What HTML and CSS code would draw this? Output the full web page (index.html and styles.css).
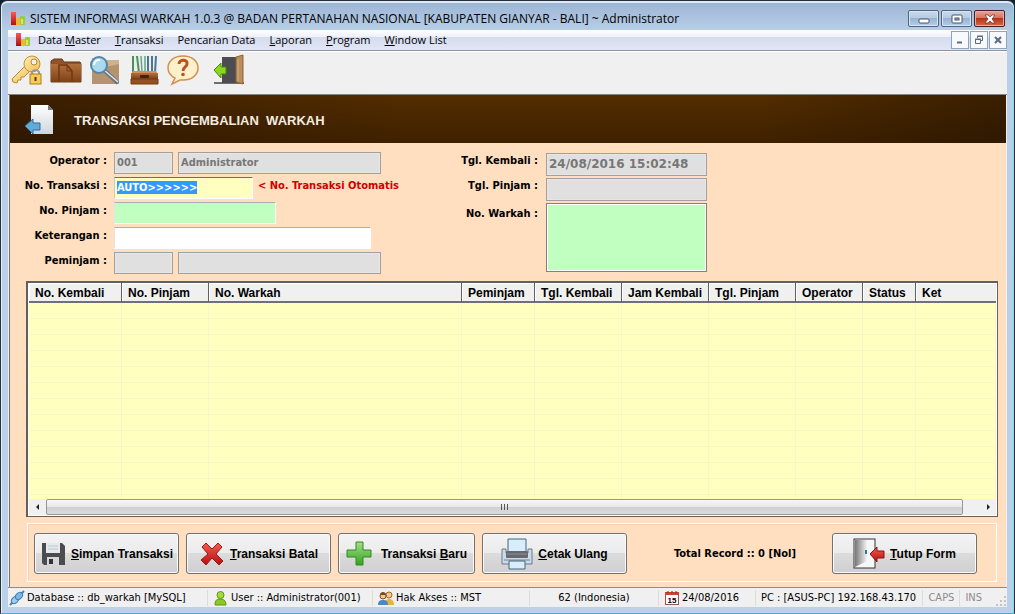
FILE: index.html
```html
<!DOCTYPE html>
<html lang="id">
  <head>
    <meta charset="UTF-8" />
    <meta name="viewport" content="width=device-width, initial-scale=1.0" />
    <title>Sistem Informasi Warkah</title>
    <link rel="stylesheet" href="styles.css" />
  </head>
  <body>
    <svg class="defs" width="0" height="0" aria-hidden="true">
      <defs>
        <linearGradient id="g-red" x1="0" y1="0" x2="0" y2="1">
          <stop offset="0" stop-color="#f0604e" />
          <stop offset="1" stop-color="#b80c10" />
        </linearGradient>
        <linearGradient id="g-green" x1="0" y1="0" x2="0" y2="1">
          <stop offset="0" stop-color="#a5dc8a" />
          <stop offset="1" stop-color="#35a31c" />
        </linearGradient>
        <linearGradient id="g-brown" x1="0" y1="0" x2="0" y2="1">
          <stop offset="0" stop-color="#b2703c" />
          <stop offset="1" stop-color="#7d4218" />
        </linearGradient>
        <linearGradient id="g-gold" x1="0" y1="0" x2="1" y2="1">
          <stop offset="0" stop-color="#ffeeb8" />
          <stop offset="1" stop-color="#eebc4e" />
        </linearGradient>
        <linearGradient id="g-page" x1="0" y1="0" x2="0" y2="1">
          <stop offset="0" stop-color="#ffffff" />
          <stop offset="1" stop-color="#cfd6dc" />
        </linearGradient>
        <linearGradient id="g-door" x1="0" y1="0" x2="1" y2="0">
          <stop offset="0" stop-color="#777" />
          <stop offset="1" stop-color="#f4f4f4" />
        </linearGradient>
        <symbol id="logo" viewBox="0 0 16 16">
          <rect x="1" y="1" width="5" height="13" fill="url(#g-red)" />
          <rect x="6" y="7" width="4" height="7" fill="#f5b52e" />
          <rect x="10" y="5" width="5" height="9" rx="1" fill="#9ccb3c" />
          <rect x="11" y="8" width="2" height="5" fill="#d8e86a" />
        </symbol>
      </defs>
    </svg>

    <div class="window">
      <!-- Judul jendela -->
      <header class="title-bar">
        <svg class="icon-16" viewBox="0 0 16 16"><use href="#logo" /></svg>
        <h1>SISTEM INFORMASI WARKAH 1.0.3 @ BADAN PERTANAHAN NASIONAL [KABUPATEN GIANYAR - BALI] ~ Administrator</h1>
        <div class="window-controls">
          <button type="button" aria-label="Minimize">
            <svg width="14" height="12" viewBox="0 0 14 12"><rect x="2" y="6" width="10" height="4" rx="1" fill="#fff" stroke="#4a5568" /></svg>
          </button>
          <button type="button" aria-label="Maximize">
            <svg width="14" height="12" viewBox="0 0 14 12"><rect x="2" y="2" width="10" height="8" rx="1" fill="#fff" stroke="#4a5568" /><rect x="5" y="5" width="4" height="2" fill="#9db9d6" stroke="#4a5568" /></svg>
          </button>
          <button type="button" class="close" aria-label="Close">
            <svg width="14" height="12" viewBox="0 0 14 12"><path d="M2 2h3l2 2 2-2h3L9 6l3 4H9L7 8l-2 2H2l3-4z" fill="#fff" stroke="#5a3038" stroke-width=".7" /></svg>
          </button>
        </div>
      </header>

      <div class="client">
        <!-- Menu utama -->
        <div class="menu-bar">
          <svg class="icon-16" viewBox="0 0 16 16"><use href="#logo" /></svg>
          <nav class="menu">
            <a href="#">Data <u>M</u>aster</a>
            <a href="#"><u>T</u>ransaksi</a>
            <a href="#">Pencarian Data</a>
            <a href="#"><u>L</u>aporan</a>
            <a href="#"><u>P</u>rogram</a>
            <a href="#"><u>W</u>indow List</a>
          </nav>
          <div class="child-controls">
            <button type="button" aria-label="Minimize form">
              <svg width="12" height="12" viewBox="0 0 12 12"><path d="M3 8.500h5" stroke="#5a6a80" stroke-width="2" /></svg>
            </button>
            <button type="button" aria-label="Restore form">
              <svg width="12" height="12" viewBox="0 0 12 12" fill="none" stroke="#5a6a80"><path d="M4.500 4V2.500h5v4H8M4 2h6" /><path d="M2.500 5.500h5v4h-5zM2 5h6" /></svg>
            </button>
            <button type="button" aria-label="Close form">
              <svg width="12" height="12" viewBox="0 0 12 12"><path d="M3 3l6 6M9 3L3 9" stroke="#5a6a80" stroke-width="2" /></svg>
            </button>
          </div>
        </div>

        <!-- Toolbar -->
        <div class="toolbar">
          <button type="button" aria-label="Hak akses">
            <svg width="32" height="32" viewBox="0 0 32 32">
              <path d="M14 12L1 25l1 3 4 1 1-3h3v-3h3l6-6z" fill="url(#g-gold)" stroke="#b98a2e" />
              <circle cx="21" cy="10" r="8" fill="url(#g-gold)" stroke="#c0923a" />
              <circle cx="23" cy="8" r="3" fill="#f0f0f0" stroke="#b98a2e" />
              <path d="M21 21v-3a4 4 0 0 1 7 0v3" fill="none" stroke="#9a9a9a" stroke-width="2" />
              <rect x="19" y="20" width="11" height="10" fill="#f6cc53" stroke="#b27a1c" />
              <path d="M24.500 23v4" stroke="#5a3708" stroke-width="2" />
            </svg>
          </button>
          <button type="button" aria-label="Data master">
            <svg width="32" height="32" viewBox="0 0 32 32">
              <path d="M1 28V7l3-2h8l2 3h16l1 2v18z" fill="#91532a" stroke="#6b3713" />
              <path d="M1 10h30v18H1z" fill="url(#g-brown)" />
              <path d="M9 27V11h8l5 6v10" fill="none" stroke="#71380f" stroke-width="1.500" />
              <path d="M17 11v6h5" fill="none" stroke="#71380f" />
            </svg>
          </button>
          <button type="button" aria-label="Pencarian">
            <svg width="32" height="32" viewBox="0 0 32 32">
              <path d="M3 4h12l2 2h13v24H3z" fill="#cdb290" />
              <path d="M3 16l27-6v20H3z" fill="#b3946e" />
              <path d="M15 16L29 29" stroke="#687280" stroke-width="4" />
              <path d="M15 16L29 28" stroke="#e4e8ec" stroke-width="1.500" />
              <circle cx="10" cy="11" r="8" fill="#a9daf0" stroke="#5585a8" stroke-width="2" />
              <path d="M5 11a5 5 0 0 1 6-5" fill="none" stroke="#fff" stroke-width="2" />
            </svg>
          </button>
          <button type="button" aria-label="Arsip">
            <svg width="32" height="32" viewBox="0 0 32 32">
              <path d="M4 2h24v17H4z" fill="#e9eeea" />
              <path d="M5 2v17M9 2l2 17" stroke="#4a8f63" stroke-width="2" />
              <path d="M13 2l1 17M17 2v17" stroke="#69a38e" stroke-width="1.500" />
              <path d="M20 2v17M24 2v17M28 2l-1 17" stroke="#4c7597" stroke-width="2" />
              <path d="M5 17h23l2 3H3z" fill="#d98b55" />
              <path d="M3 19h27v6H3z" fill="url(#g-brown)" />
              <path d="M3 25h27v5H3z" fill="#96501f" stroke="#703a12" />
              <rect x="12" y="21" width="9" height="3" rx="1" fill="#45220a" />
            </svg>
          </button>
          <button type="button" aria-label="Bantuan">
            <svg width="32" height="32" viewBox="0 0 32 32">
              <path d="M16 2c9 0 15 5 15 12s-6 12-15 12h-3l-8 4 3-6C4 22 1 19 1 14 1 7 7 2 16 2z" fill="#fff0cc" stroke="#cf9150" stroke-width="1.500" />
              <path d="M12 10c0-5 9-5 8 0 0 3-4 3-4 7" fill="none" stroke="#bd5220" stroke-width="3" />
              <circle cx="16" cy="20.500" r="1.800" fill="#bd5220" />
            </svg>
          </button>
          <button type="button" class="exit" aria-label="Keluar">
            <svg width="32" height="32" viewBox="0 0 32 32">
              <path d="M1 29h30" stroke="#444" stroke-width="1.500" />
              <rect x="9" y="3" width="15" height="26" fill="#4d4c50" />
              <path d="M23 3l7-2v29l-7-2z" fill="#b98d5c" stroke="#8d6336" />
              <path d="M25 5v22" stroke="#d4b083" />
              <path d="M1 16l7-7v4h5v7H8v4z" fill="#8bd61f" stroke="#498a0c" />
            </svg>
          </button>
        </div>

        <main class="form-window">
          <div class="banner">
            <svg width="32" height="32" viewBox="0 0 32 32">
              <path d="M7 1h17l5 5v24H7z" fill="url(#g-page)" />
              <path d="M24 1v5h5z" fill="#6f7780" />
              <path d="M1 22l8-7v4h7v7H9v4z" fill="#62abd9" stroke="#2d6e9e" />
            </svg>
            <h2>TRANSAKSI PENGEMBALIAN&nbsp; WARKAH</h2>
          </div>

          <!-- Data transaksi -->
          <form class="entry" id="entry-form">
            <div class="fields fields-left">
              <label for="operator-id">Operator :</label>
              <div class="controls">
                <input type="text" id="operator-id" class="short" value="001" disabled />
                <input type="text" class="name" value="Administrator" aria-label="Nama operator" disabled />
              </div>
              <label for="no-transaksi">No. Transaksi :</label>
              <div class="controls">
                <input type="text" id="no-transaksi" class="auto" value="AUTO&gt;&gt;&gt;&gt;&gt;&gt;" />
                <span class="hint">&lt; No. Transaksi Otomatis</span>
              </div>
              <label for="no-pinjam">No. Pinjam :</label>
              <div class="controls">
                <input type="text" id="no-pinjam" class="loan" />
              </div>
              <label for="keterangan">Keterangan :</label>
              <div class="controls">
                <input type="text" id="keterangan" class="note" />
              </div>
              <label for="peminjam-id">Peminjam :</label>
              <div class="controls">
                <input type="text" id="peminjam-id" class="short" disabled />
                <input type="text" class="name" aria-label="Nama peminjam" disabled />
              </div>
            </div>
            <div class="fields fields-right">
              <label for="tgl-kembali">Tgl. Kembali :</label>
              <input type="text" id="tgl-kembali" class="date" value="24/08/2016 15:02:48" disabled />
              <label for="tgl-pinjam">Tgl. Pinjam :</label>
              <input type="text" id="tgl-pinjam" disabled />
              <label for="no-warkah" class="low">No. Warkah :</label>
              <textarea id="no-warkah"></textarea>
            </div>
          </form>

          <!-- Daftar pengembalian -->
          <div class="list">
            <div class="list-body">
              <table>
                <colgroup>
                  <col class="w-kembali" />
                  <col class="w-date" />
                  <col class="w-warkah" />
                  <col class="w-peminjam" />
                  <col class="w-date" />
                  <col class="w-date" />
                  <col class="w-date" />
                  <col class="w-operator" />
                  <col class="w-status" />
                  <col />
                </colgroup>
                <thead>
                  <tr>
                    <th>No. Kembali</th>
                    <th>No. Pinjam</th>
                    <th>No. Warkah</th>
                    <th>Peminjam</th>
                    <th>Tgl. Kembali</th>
                    <th>Jam Kembali</th>
                    <th>Tgl. Pinjam</th>
                    <th>Operator</th>
                    <th>Status</th>
                    <th>Ket</th>
                  </tr>
                </thead>
                <tbody>
                  <tr><td></td><td></td><td></td><td></td><td></td><td></td><td></td><td></td><td></td><td></td></tr>
                </tbody>
              </table>
            </div>
            <div class="scrollbar">
              <button type="button" aria-label="Geser kiri"><svg width="8" height="8" viewBox="0 0 8 8"><path d="M5 1v6L2 4z" fill="#222" /></svg></button>
              <div class="thumb"><i></i><i></i><i></i></div>
              <button type="button" aria-label="Geser kanan"><svg width="8" height="8" viewBox="0 0 8 8"><path d="M3 1v6l3-3z" fill="#222" /></svg></button>
            </div>
          </div>

          <!-- Tombol aksi -->
          <div class="actions">
            <button type="button">
              <svg width="26" height="26" viewBox="0 0 26 26">
                <path d="M2 2h20l3 3v19H4l-2-2z" fill="#4b4b50" />
                <rect x="6" y="2" width="14" height="10" fill="#e4eaee" />
                <path d="M8 5h10M8 8h10" stroke="#bcc5cc" />
                <rect x="7" y="16" width="12" height="8" fill="#d5d8da" />
                <rect x="9" y="18" width="4" height="5" fill="#333" />
              </svg>
              <span><u>S</u>impan Transaksi</span>
            </button>
            <button type="button">
              <svg width="26" height="26" viewBox="0 0 26 26">
                <path d="M3 6l4-4 6 6 6-6 4 4-6 7 7 7-4 4-7-7-6 7-5-5 7-6z" fill="url(#g-red)" stroke="#a31414" />
              </svg>
              <span><u>T</u>ransaksi Batal</span>
            </button>
            <button type="button" class="new">
              <svg width="26" height="26" viewBox="0 0 26 26">
                <path d="M10 1h7v8h8v7h-8v8h-7v-8H1V9h9z" fill="url(#g-green)" stroke="#2f8a22" />
              </svg>
              <span>Transaksi <u>B</u>aru</span>
            </button>
            <button type="button">
              <svg width="32" height="32" viewBox="0 0 32 32">
                <path d="M1 11h4v4h22v-4h4v15H1z" fill="#cbdbe7" stroke="#68798a" />
                <path d="M7 1h18v13H7z" fill="#d5edfd" stroke="#4d6576" />
                <rect x="5" y="13" width="22" height="7" rx="1" fill="#66696e" />
                <path d="M6 16h20" stroke="#8e9196" />
                <path d="M3 22h26" stroke="#6c8294" />
                <path d="M8 23h16v8H8z" fill="#d5edfd" stroke="#4d6576" />
              </svg>
              <span><u>C</u>etak Ulang</span>
            </button>
            <output class="total">Total Record :: 0 [Nol]</output>
            <button type="button" class="close-form">
              <svg width="32" height="32" viewBox="0 0 32 32">
                <rect x="1" y="1" width="21" height="29" fill="#f7f7f7" stroke="#333" />
                <path d="M2 2h12v21L2 29z" fill="url(#g-door)" />
                <path d="M13 12v4" stroke="#2d7da0" stroke-width="2" />
                <path d="M17 16l7-7v4h7v7h-7v4z" fill="url(#g-red)" stroke="#8e1111" />
              </svg>
              <span><u>T</u>utup Form</span>
            </button>
          </div>
        </main>

        <footer class="status-bar">
          <div class="cell db">
            <svg class="icon-16" viewBox="0 0 16 16">
              <path d="M1 15l3-3M12 4l3-3" stroke="#4583b5" stroke-width="2" />
              <ellipse cx="6" cy="10" rx="4" ry="3" transform="rotate(-45 6 10)" fill="#9fccec" stroke="#3e7fb5" />
              <ellipse cx="10" cy="6" rx="4" ry="3" transform="rotate(-45 10 6)" fill="#7fb9e3" stroke="#3e7fb5" />
            </svg>
            Database :: db_warkah [MySQL]
          </div>
          <div class="cell user">
            <svg class="icon-16" viewBox="0 0 16 16">
              <path d="M2 15c0-5 2-6 5-6s6 1 6 6z" fill="#8cc921" stroke="#5f9414" />
              <circle cx="7.500" cy="5" r="3.500" fill="#a6dc3a" stroke="#5f9414" />
            </svg>
            User :: Administrator(001)
          </div>
          <div class="cell access">
            <svg class="icon-16" viewBox="0 0 16 16">
              <path d="M7 15c0-4 1-6 4-6s5 2 5 6z" fill="#e9b13d" />
              <circle cx="11" cy="5" r="3" fill="#f2c896" stroke="#9c6a22" />
              <path d="M0 15c0-4 2-5 5-5s5 1 5 5z" fill="#4a86c8" />
              <circle cx="5" cy="6" r="3" fill="#f2c896" stroke="#7d4a1d" />
              <path d="M2 5c0-4 6-4 6 0z" fill="#7d4a1d" />
            </svg>
            Hak Akses :: MST
          </div>
          <div class="cell region">62 (Indonesia)</div>
          <div class="cell today">
            <svg class="icon-16" viewBox="0 0 16 16">
              <rect x="1.500" y="2.500" width="13" height="12" fill="#fff" stroke="#8b5a50" />
              <path d="M1 2h14v3H1z" fill="#c8442e" />
              <path d="M4 1v2M8 1v2M12 1v2" stroke="#7a2a1c" />
              <text x="8" y="13" class="cal-day">15</text>
            </svg>
            24/08/2016
          </div>
          <div class="cell pc">PC : [ASUS-PC] 192.168.43.170</div>
          <div class="cell key">CAPS</div>
          <div class="cell key">INS</div>
          <svg class="grip" width="12" height="12" viewBox="0 0 12 12"><path d="M9 1h2v2H9zM9 5h2v2H9zM5 5h2v2H5zM9 9h2v2H9zM5 9h2v2H5zM1 9h2v2H1z" fill="#c4c4c4" /></svg>
        </footer>
      </div>
    </div>

    <script>
      // Nomor transaksi langsung terpilih saat form dibuka
      const noTransaksi = document.getElementById("no-transaksi");
      noTransaksi.focus();
      noTransaksi.select();
    </script>
  </body>
</html>
```
FILE: styles.css
```css
/* ======= Variabel ======= */
:root {
  --font-ui: "Open Sans", "Noto Sans", sans-serif;
  --font-form: "DejaVu Sans Condensed", "DejaVu Sans", sans-serif;
  --font-bold: "Liberation Sans", Arial, sans-serif;
  --color-form: #ffdfc0;
  --color-list: #ffffc0;
  --color-green: #c0ffc0;
  --color-disabled: #e0e0e0;
  --color-face: #f0f0f0;
}

* {
  box-sizing: border-box;
  margin: 0;
  padding: 0;
}

body {
  font-family: var(--font-form);
  font-size: 11px;
  color: #000;
  background: #10202c;
}

.defs {
  position: absolute;
}

button {
  font: inherit;
  border: none;
  background: none;
}

.icon-16 {
  width: 16px;
  height: 16px;
  flex: none;
}

/* ======= Jendela ======= */
.window {
  min-height: 100vh;
  display: flex;
  flex-direction: column;
  padding: 0 7px 6px;
  border: 1px solid #26303c;
  border-bottom-color: #18c8d0;
  border-radius: 7px 7px 0 0;
  background: linear-gradient(#9ab4d3, #b9cfe8 30px, #bad1ea);
  box-shadow: inset 0 2px 0 #dfeaf6, inset 1px 0 0 #e6f0fa, inset -1px 0 0 #7fdcf0;
}

.title-bar {
  display: flex;
  align-items: center;
  height: 29px;
  padding: 6px 2px 0;
  gap: 4px;
}

.title-bar h1 {
  flex: 1;
  font-family: var(--font-ui);
  font-size: 12px;
  font-weight: normal;
  white-space: nowrap;
}

.window-controls {
  display: flex;
  gap: 2px;
}

.window-controls button {
  display: flex;
  align-items: center;
  justify-content: center;
  width: 31px;
  height: 17px;
  border: 1px solid #52647c;
  border-radius: 2px;
  background: linear-gradient(#c8d9eb, #b4cae2 50%, #98b4d2 50%, #b4cde6);
  box-shadow: inset 0 0 0 1px #d8e5f2;
}

.window-controls .close {
  border-color: #4a1c28;
  background: linear-gradient(#e6a598, #d4705c 50%, #b93218 50%, #d66a48);
  box-shadow: inset 0 0 0 1px #e8b0a4;
}

.client {
  flex: 1;
  display: flex;
  flex-direction: column;
  background: var(--color-face);
}

/* ======= Menu ======= */
.menu-bar {
  display: flex;
  align-items: center;
  height: 21px;
  padding: 0 0 1px 7px;
  border-bottom: 1px solid #8e939c;
  background: linear-gradient(#fff, #eef1fa 35%, #d5dcee 35%, #e0e6f5);
}

.menu {
  flex: 1;
  display: flex;
  gap: 14px;
  margin-left: 7px;
  font-family: var(--font-ui);
  font-size: 11px;
  white-space: nowrap;
}

.menu a {
  color: #000;
  text-decoration: none;
}

.child-controls {
  display: flex;
  gap: 1px;
}

.child-controls button {
  display: flex;
  align-items: center;
  justify-content: center;
  width: 18px;
  height: 18px;
  border: 1px solid #8fa3bd;
  background: #f7f9fd;
}

/* ======= Toolbar ======= */
.toolbar {
  display: flex;
  gap: 7px;
  padding: 2px 3px 8px;
  border-bottom: 1px solid #848484;
  border-top: 1px solid #fff;
}

.toolbar button {
  height: 32px;
}

.toolbar .exit {
  margin-left: 7px;
}

/* ======= Form ======= */
.form-window {
  flex: 1;
  display: flex;
  flex-direction: column;
  margin: 0 1px;
  border-left: 1px solid #707070;
  background: var(--color-form);
}

.banner {
  display: flex;
  align-items: center;
  gap: 18px;
  height: 48px;
  padding: 2px 14px 0;
  background: linear-gradient(transparent, rgba(30, 15, 0, 0.4)),
    linear-gradient(to right, #3a1e00, #542d00 40%, #542d00 75%, #3a1f00);
}

.banner h2 {
  font-family: var(--font-bold);
  font-size: 13px;
  font-weight: bold;
  color: #f5ece0;
}

.entry {
  display: flex;
  padding: 9px 0 7px;
  font-weight: bold;
}

.fields {
  display: grid;
  column-gap: 7px;
  row-gap: 3px;
}

.fields-left {
  grid-template-columns: 97px auto;
  grid-auto-rows: 22px;
  width: 444px;
}

.fields-right {
  grid-template-columns: 84px 161px;
  grid-template-rows: 23px 23px 69px;
  row-gap: 2px;
  column-gap: 8px;
  padding-top: 1px;
}

.fields label {
  text-align: right;
  line-height: 18px;
  white-space: nowrap;
}

.fields-right label {
  line-height: 16px;
}

.fields .low {
  padding-top: 3px;
}

.controls {
  display: flex;
  gap: 5px;
}

.fields input,
.fields textarea {
  font: inherit;
  min-width: 0;
  padding: 0 2px 2px;
  border: 1px solid #a0a0a0;
  outline: none;
  resize: none;
}

.fields input:disabled {
  color: #777;
  background: var(--color-disabled);
  box-shadow: inset 0 0 0 1px #ebe6e0;
}

.controls .short {
  width: 59px;
}

.controls .name {
  width: 203px;
}

.controls .auto {
  width: 139px;
  border-color: #3d7bad #fff #fff #b5cfe7;
  background: var(--color-list);
}

.auto::selection {
  color: #fff;
  background: #3399ff;
}

.controls .loan,
.controls .note {
  border-color: #abadb3 #fff #fff #e2e3ea;
}

.controls .loan {
  width: 162px;
  background: var(--color-green);
}

.controls .note {
  width: 257px;
}

.hint {
  line-height: 18px;
  color: #d00000;
}

.fields .date {
  font-family: "DejaVu Sans", sans-serif;
  font-size: 12px;
}

.fields textarea {
  border-color: #808080;
  background: var(--color-green);
  box-shadow: inset 0 0 0 1px #fff;
}

/* ======= Daftar ======= */
.list {
  flex: 1;
  display: flex;
  flex-direction: column;
  margin: 0 8px 0 16px;
  padding: 0 1px 1px;
  border: 1px solid #6e5d50;
  border-top: 2px solid #606060;
  border-left: 2px solid #606060;
  background: #fff;
}

.list-body {
  flex: 1;
  display: flex;
  min-height: 180px;
}

.list table {
  width: 100%;
  table-layout: fixed;
  border-collapse: separate;
  border-spacing: 0;
  background: var(--color-list);
}

.list th {
  height: 20px;
  padding: 2px 0 0 6px;
  border-right: 1px solid #606060;
  border-bottom: 2px solid #707078;
  background: linear-gradient(#fff 1px, #f0f0f0 1px);
  box-shadow: inset 1px 0 0 #fff;
  font-family: var(--font-bold);
  font-size: 12px;
  line-height: 14px;
  text-align: left;
  white-space: nowrap;
}

.list th:last-child {
  border-right: none;
}

.list td {
  border-right: 1px solid #f6f6c8;
  background: repeating-linear-gradient(transparent 0 15px, #f6f6c8 15px 16px);
}

.w-kembali {
  width: 93px;
}

.w-date {
  width: 87px;
}

.w-warkah {
  width: 253px;
}

.w-peminjam {
  width: 73px;
}

.w-operator {
  width: 67px;
}

.w-status {
  width: 53px;
}

.scrollbar {
  display: flex;
  height: 16px;
  background: var(--color-face);
}

.scrollbar button {
  width: 17px;
  display: flex;
  align-items: center;
  justify-content: center;
}

.thumb {
  flex: 1;
  display: flex;
  align-items: center;
  justify-content: center;
  gap: 2px;
  margin-right: 16px;
  border: 1px solid #979797;
  border-radius: 2px;
  background: linear-gradient(#f6f6f6, #e8e8ea 50%, #cfcfd3 50%, #dcdce0);
}

.thumb i {
  width: 1px;
  height: 6px;
  background: #555;
}

/* ======= Tombol aksi ======= */
.actions {
  display: flex;
  gap: 7px;
  margin: 6px 9px 5px 17px;
  padding: 9px 19px 7px 6px;
  border: 1px solid #fff;
  box-shadow: inset 1px 1px 0 #efd3b8;
}

.actions button {
  display: flex;
  align-items: center;
  justify-content: center;
  gap: 5px;
  width: 145px;
  height: 41px;
  border: 1px solid #707070;
  border-radius: 3px;
  background: linear-gradient(#f3f3f3, #ebebeb 50%, #dcdcdc 50%, #cfcfcf);
  box-shadow: inset 0 0 0 1px #fafafa;
  font-family: var(--font-bold);
  font-size: 12px;
  font-weight: bold;
  white-space: nowrap;
}

.actions .new {
  width: 137px;
  gap: 9px;
}

.total {
  margin: auto auto auto 40px;
  font-weight: bold;
}

/* ======= Status bar ======= */
.status-bar {
  display: flex;
  align-items: center;
  height: 20px;
  border-top: 1px solid #8c8c8c;
  background: #f1f0f0;
  white-space: nowrap;
}

.cell {
  display: flex;
  align-items: center;
  gap: 2px;
  height: 16px;
  padding: 0 5px;
  border-right: 1px solid #dcdcdc;
}

.cell.db {
  width: 200px;
  padding-left: 1px;
}

.cell.user {
  width: 165px;
}

.cell.access {
  width: 157px;
}

.cell.region {
  width: 129px;
  justify-content: center;
}

.cell.today {
  width: 97px;
}

.cell.pc {
  flex: 1;
}

.cell.key {
  color: #8c8c8c;
}

.cell:nth-child(8) {
  border-right: none;
}

.cal-day {
  font: bold 8px "Liberation Sans", sans-serif;
  text-anchor: middle;
}

.grip {
  margin: 6px 0 0 8px;
}
```
